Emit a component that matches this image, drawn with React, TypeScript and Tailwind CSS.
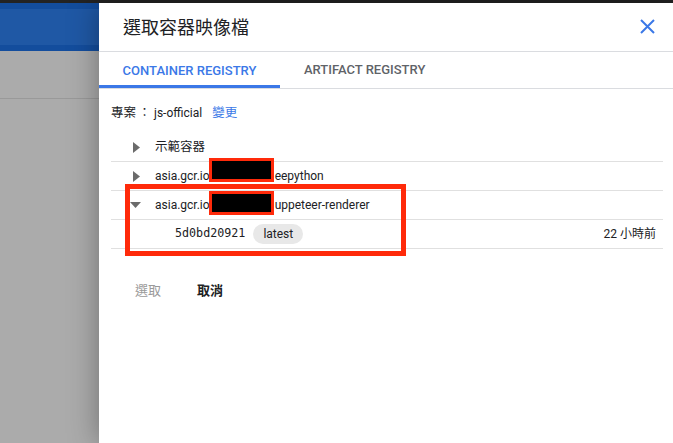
const cjk = "font-['Roboto','Noto_Sans_CJK_TC',sans-serif]"

const rows = [
  { label: '示範容器', open: false },
  { label: 'asia.gcr.io/js-official/treepython', short: ['asia.gcr.io', 'eepython'], open: false },
  { label: 'asia.gcr.io/js-official/puppeteer-renderer', short: ['asia.gcr.io', 'uppeteer-renderer'], open: true },
]

function Caret({ open }: { open: boolean }) {
  if (open) {
    return (
      <svg width="11" height="6" viewBox="0 0 11 6" className="ml-[19px] mr-[14px]">
        <path d="M0 0h11L5.5 6z" fill="#6b6b6b" />
      </svg>
    )
  }
  return (
    <svg width="7" height="11" viewBox="0 0 7 11" className="ml-[22px] mr-[15px]">
      <path d="M0 0l7 5.5L0 11z" fill="#6b6b6b" />
    </svg>
  )
}

export default function App() {
  return (
    <div className={`relative w-[673px] h-[443px] overflow-hidden bg-[#ababab] flex flex-col ${cjk}`}>
      <div className="h-[3px] bg-[#232323]" />
      <div className="flex flex-1">
        {/* Dimmed page behind the panel */}
        <div className="w-[99px] flex flex-col">
          <div className="h-[48px] bg-[#1f58a5] border-y-[6px] border-[#134d9d]" />
          <div className="h-[48px] border-b border-[#999999]" />
        </div>

        {/* Side panel */}
        <div className="flex-1 bg-white flex flex-col shadow-[0_0_28px_rgba(0,0,0,0.35)]">
          <div className="h-[49px] flex items-center justify-between pl-[24px] pr-[18px] border-b border-[#dadce0]">
            <h1 className="text-[18px] text-[#202124]">選取容器映像檔</h1>
            <svg width="15" height="15" viewBox="0 0 15 15" className="mb-[1px]">
              <path d="M1 1l13 13M14 1L1 14" stroke="#3b78e7" strokeWidth="2" />
            </svg>
          </div>

          <div className="flex h-[37px] border-b border-[#dadce0] text-[13px] font-medium">
            <div className="w-[181px] flex items-center justify-center border-b-[3px] border-[#3b78e7] text-[#3b78e7] pt-[4px]">
              CONTAINER REGISTRY
            </div>
            <div className="px-[24px] flex items-center text-[#5f6368] pb-[1px]">ARTIFACT REGISTRY</div>
          </div>

          <div className="pl-[12px] pr-[10px] pt-[14px]">
            <div className="h-[20px] flex items-center text-[12px] text-[#202124]">
              <span className="text-[12.5px]">專案</span>
              <span className="w-[17px] text-center">：</span>
              <span className="ml-[1px]">js-official</span>
              <span className="ml-[10px] text-[12.5px] text-[#3b78e7]">變更</span>
            </div>

            <div className="mt-[10px] text-[12px] text-[#202124]">
              {rows.map((r) => (
                <div key={r.label} className="h-[29px] flex items-center border-b border-[#e0e0e0]">
                  <Caret open={r.open} />
                  {r.short ? (
                    <span className="flex items-center">
                      <span>{r.short[0]}</span>
                      <span className="w-[65px]" />
                      <span>{r.short[1]}</span>
                    </span>
                  ) : (
                    <span className="text-[12.5px]">{r.label}</span>
                  )}
                </div>
              ))}
              <div className="h-[29px] flex items-center border-b border-[#e0e0e0] pr-[7px]">
                <span className="ml-[64px] font-['DejaVu_Sans_Mono',monospace] text-[11.7px]">5d0bd20921</span>
                <span className="ml-[8px] h-[20px] px-[10px] rounded-full bg-[#e8e8e8] flex items-center">latest</span>
                <span className="ml-auto">22 小時前</span>
              </div>
            </div>
          </div>

          <div className="flex items-center pl-[36px] mt-[32px] text-[13px]">
            <span className="text-[#9a9a9a]">選取</span>
            <span className="ml-[36px] font-semibold text-[#202124]">取消</span>
          </div>
        </div>
      </div>

      {/* Annotation marks drawn over the screenshot */}
      <div className="absolute left-[125px] top-[184px] w-[281px] h-[72px] border-[5px] border-[#ff2a0a]" />
      <div className="absolute left-[209px] top-[158px] w-[65px] h-[24px] border-[3px] border-[#ff2a0a] bg-black" />
      <div className="absolute left-[209px] top-[191px] w-[65px] h-[24px] border-[3px] border-[#ff2a0a] bg-black" />
    </div>
  )
}
